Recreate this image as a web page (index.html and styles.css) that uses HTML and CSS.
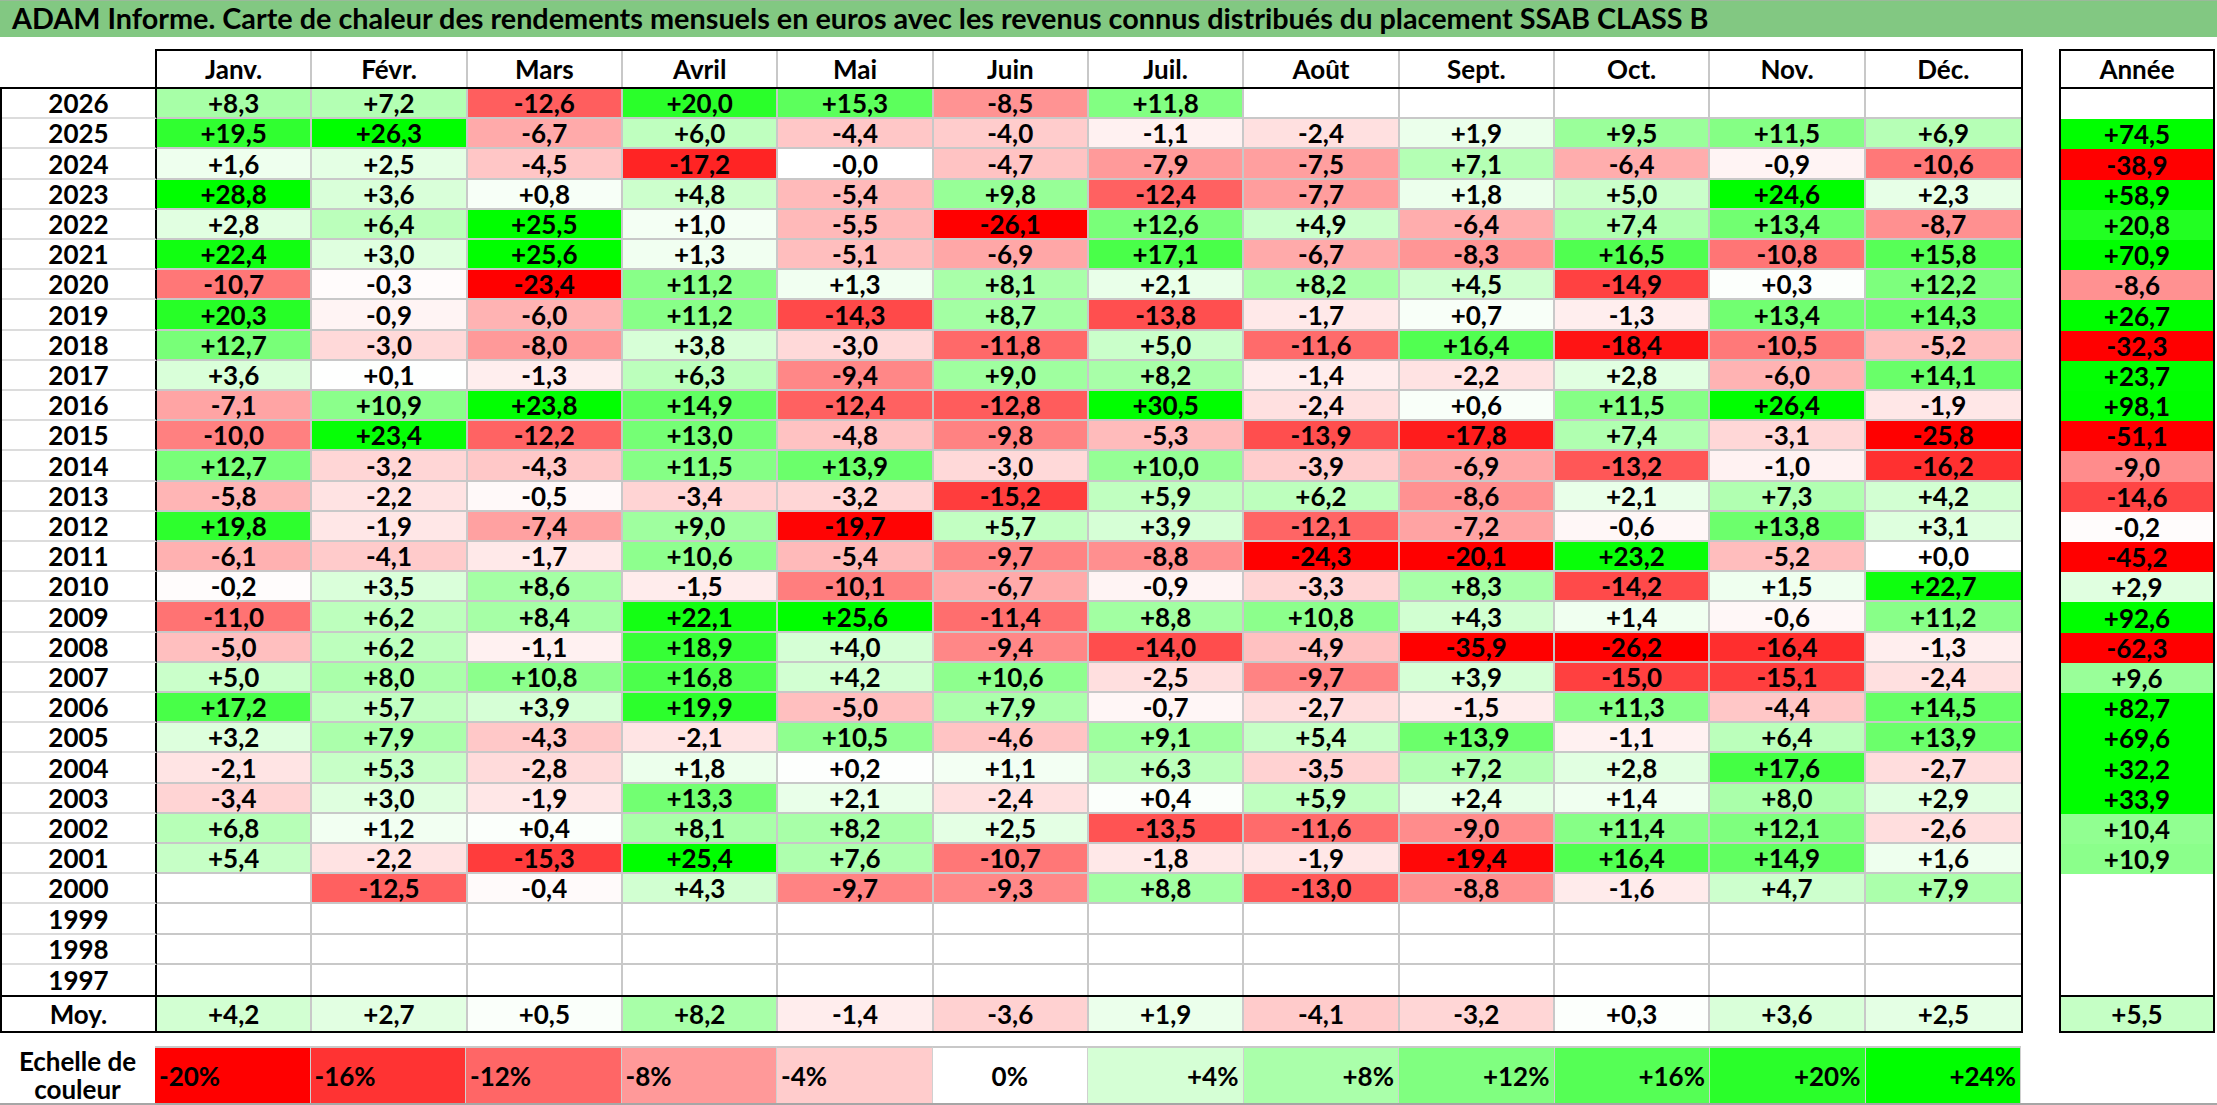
FILE: index.html
```html
<!DOCTYPE html>
<html lang="fr">
<head>
<meta charset="utf-8">
<title>ADAM Informe - SSAB CLASS B</title>
<link rel="stylesheet" href="styles.css">
</head>
<body>
<div class="page">
  <div class="title">ADAM Informe. Carte de chaleur des rendements mensuels en euros avec les revenus connus distribués du placement SSAB CLASS B</div>
  <div class="tables">
    <div class="left">
      <div class="head-row">
        <div class="months-head" id="months-head"></div>
      </div>
      <div class="data" id="data"></div>
      <div class="moy" id="moy"></div>
    </div>
    <div class="right">
      <div class="year-head">Année</div>
      <div class="year-data" id="year-data"></div>
      <div class="year-moy" id="year-moy"></div>
    </div>
  </div>
  <div class="scale" id="scale">
    <div class="scale-label">Echelle de<br>couleur</div>
  </div>
</div>
<script src="script.js"></script>
</body>
</html>
```

FILE: styles.css
```css
html, body {
  margin: 0;
  padding: 0;
  background: #ffffff;
}

.page {
  width: 2217px;
  height: 1105px;
  box-sizing: border-box;
  border-bottom: 2px solid #a6a6a6;
  font-family: Lato, "Liberation Sans", sans-serif;
  color: #000;
  overflow: hidden;
}

.title {
  height: 37px;
  box-sizing: border-box;
  border-top: 1px solid #9bb99b;
  background: #82c882;
  font-weight: 700;
  font-size: 28.8px;
  line-height: 34px;
  padding-left: 12px;
  white-space: nowrap;
}

.tables {
  display: flex;
  gap: 36px;
  margin-top: 12px;
}

.left {
  width: 2023px;
  display: flex;
  flex-direction: column;
}

.head-row {
  height: 38px;
  display: flex;
}

.months-head {
  margin-left: 155px;
  width: 1868px;
  box-sizing: border-box;
  border: 2px solid #000;
  border-bottom: none;
  display: grid;
  grid-template-columns: repeat(12, 1fr);
}

.hcell {
  display: flex;
  align-items: center;
  justify-content: center;
  font-weight: 700;
  font-size: 26px;
  border-right: 2px solid #c8c8c8;
}

.hcell:last-child {
  border-right: none;
}

.data {
  height: 908px;
  box-sizing: border-box;
  border: 2px solid #000;
  border-bottom: none;
  display: grid;
  grid-template-columns: 155px repeat(12, 1fr);
  grid-template-rows: repeat(30, 1fr);
}

.cell {
  box-sizing: border-box;
  display: flex;
  align-items: center;
  justify-content: center;
  font-weight: 700;
  font-size: 26px;
  border-right: 2px solid #c8c8c8;
  border-bottom: 2px solid #c8c8c8;
  min-width: 0;
  min-height: 0;
}

.data .cell:nth-child(13n) {
  border-right: none;
}

.data .cell:nth-last-child(-n+13) {
  border-bottom: none;
}

.cell.yr {
  border-right: 2px solid #000;
  border-bottom-color: #dcdcdc;
}

.moy {
  height: 38px;
  box-sizing: border-box;
  border: 2px solid #000;
  display: grid;
  grid-template-columns: 155px repeat(12, 1fr);
}

.moy .cell {
  border-bottom: none;
}

.moy .cell:last-child {
  border-right: none;
}

.right {
  width: 156px;
  display: flex;
  flex-direction: column;
}

.year-head {
  height: 38px;
  box-sizing: border-box;
  border: 2px solid #000;
  border-bottom: none;
  display: flex;
  align-items: center;
  justify-content: center;
  font-weight: 700;
  font-size: 26px;
}

.year-data {
  height: 908px;
  box-sizing: border-box;
  border: 2px solid #000;
  border-bottom: none;
  display: grid;
  grid-template-rows: repeat(30, 1fr);
}

.acell {
  display: flex;
  align-items: center;
  justify-content: center;
  font-weight: 700;
  font-size: 26px;
  min-height: 0;
}

.year-moy {
  height: 38px;
  box-sizing: border-box;
  border: 2px solid #000;
  display: flex;
}

.year-moy .acell {
  flex: 1;
}

.scale {
  margin-top: 13px;
  height: 57px;
  display: grid;
  grid-template-columns: 155px repeat(12, 155.5px);
}

.scale-label {
  display: flex;
  align-items: center;
  justify-content: center;
  text-align: center;
  font-size: 26px;
  font-weight: 700;
  line-height: 28px;
}

.scell {
  box-sizing: border-box;
  display: flex;
  align-items: center;
  padding: 0 4px;
  font-size: 26px;
  font-weight: 700;
  border-top: 2px solid #c8c8c8;
  border-right: 1px solid #d0d0d0;
}

.scell.neg {
  justify-content: flex-start;
}

.scell.zero {
  justify-content: center;
}

.scell.pos {
  justify-content: flex-end;
}
```

FILE: script.js
```js
(function () {
  var months = ["Janv.", "Févr.", "Mars", "Avril", "Mai", "Juin", "Juil.", "Août", "Sept.", "Oct.", "Nov.", "Déc."];
  var rows = [
    ["2026", "+8,3 +7,2 -12,6 +20,0 +15,3 -8,5 +11,8 _ _ _ _ _", "_"],
    ["2025", "+19,5 +26,3 -6,7 +6,0 -4,4 -4,0 -1,1 -2,4 +1,9 +9,5 +11,5 +6,9", "+74,5"],
    ["2024", "+1,6 +2,5 -4,5 -17,2 -0,0 -4,7 -7,9 -7,5 +7,1 -6,4 -0,9 -10,6", "-38,9"],
    ["2023", "+28,8 +3,6 +0,8 +4,8 -5,4 +9,8 -12,4 -7,7 +1,8 +5,0 +24,6 +2,3", "+58,9"],
    ["2022", "+2,8 +6,4 +25,5 +1,0 -5,5 -26,1 +12,6 +4,9 -6,4 +7,4 +13,4 -8,7", "+20,8"],
    ["2021", "+22,4 +3,0 +25,6 +1,3 -5,1 -6,9 +17,1 -6,7 -8,3 +16,5 -10,8 +15,8", "+70,9"],
    ["2020", "-10,7 -0,3 -23,4 +11,2 +1,3 +8,1 +2,1 +8,2 +4,5 -14,9 +0,3 +12,2", "-8,6"],
    ["2019", "+20,3 -0,9 -6,0 +11,2 -14,3 +8,7 -13,8 -1,7 +0,7 -1,3 +13,4 +14,3", "+26,7"],
    ["2018", "+12,7 -3,0 -8,0 +3,8 -3,0 -11,8 +5,0 -11,6 +16,4 -18,4 -10,5 -5,2", "-32,3"],
    ["2017", "+3,6 +0,1 -1,3 +6,3 -9,4 +9,0 +8,2 -1,4 -2,2 +2,8 -6,0 +14,1", "+23,7"],
    ["2016", "-7,1 +10,9 +23,8 +14,9 -12,4 -12,8 +30,5 -2,4 +0,6 +11,5 +26,4 -1,9", "+98,1"],
    ["2015", "-10,0 +23,4 -12,2 +13,0 -4,8 -9,8 -5,3 -13,9 -17,8 +7,4 -3,1 -25,8", "-51,1"],
    ["2014", "+12,7 -3,2 -4,3 +11,5 +13,9 -3,0 +10,0 -3,9 -6,9 -13,2 -1,0 -16,2", "-9,0"],
    ["2013", "-5,8 -2,2 -0,5 -3,4 -3,2 -15,2 +5,9 +6,2 -8,6 +2,1 +7,3 +4,2", "-14,6"],
    ["2012", "+19,8 -1,9 -7,4 +9,0 -19,7 +5,7 +3,9 -12,1 -7,2 -0,6 +13,8 +3,1", "-0,2"],
    ["2011", "-6,1 -4,1 -1,7 +10,6 -5,4 -9,7 -8,8 -24,3 -20,1 +23,2 -5,2 +0,0", "-45,2"],
    ["2010", "-0,2 +3,5 +8,6 -1,5 -10,1 -6,7 -0,9 -3,3 +8,3 -14,2 +1,5 +22,7", "+2,9"],
    ["2009", "-11,0 +6,2 +8,4 +22,1 +25,6 -11,4 +8,8 +10,8 +4,3 +1,4 -0,6 +11,2", "+92,6"],
    ["2008", "-5,0 +6,2 -1,1 +18,9 +4,0 -9,4 -14,0 -4,9 -35,9 -26,2 -16,4 -1,3", "-62,3"],
    ["2007", "+5,0 +8,0 +10,8 +16,8 +4,2 +10,6 -2,5 -9,7 +3,9 -15,0 -15,1 -2,4", "+9,6"],
    ["2006", "+17,2 +5,7 +3,9 +19,9 -5,0 +7,9 -0,7 -2,7 -1,5 +11,3 -4,4 +14,5", "+82,7"],
    ["2005", "+3,2 +7,9 -4,3 -2,1 +10,5 -4,6 +9,1 +5,4 +13,9 -1,1 +6,4 +13,9", "+69,6"],
    ["2004", "-2,1 +5,3 -2,8 +1,8 +0,2 +1,1 +6,3 -3,5 +7,2 +2,8 +17,6 -2,7", "+32,2"],
    ["2003", "-3,4 +3,0 -1,9 +13,3 +2,1 -2,4 +0,4 +5,9 +2,4 +1,4 +8,0 +2,9", "+33,9"],
    ["2002", "+6,8 +1,2 +0,4 +8,1 +8,2 +2,5 -13,5 -11,6 -9,0 +11,4 +12,1 -2,6", "+10,4"],
    ["2001", "+5,4 -2,2 -15,3 +25,4 +7,6 -10,7 -1,8 -1,9 -19,4 +16,4 +14,9 +1,6", "+10,9"],
    ["2000", "_ -12,5 -0,4 +4,3 -9,7 -9,3 +8,8 -13,0 -8,8 -1,6 +4,7 +7,9", "_"],
    ["1999", "_ _ _ _ _ _ _ _ _ _ _ _", "_"],
    ["1998", "_ _ _ _ _ _ _ _ _ _ _ _", "_"],
    ["1997", "_ _ _ _ _ _ _ _ _ _ _ _", "_"]
  ];
  var moy = "+4,2 +2,7 +0,5 +8,2 -1,4 -3,6 +1,9 -4,1 -3,2 +0,3 +3,6 +2,5";
  var moyYear = "+5,5";

  function colour(v) {
    var c;
    if (v >= 0) {
      c = Math.round(255 * (1 - Math.min(v / 24, 1)));
      return "rgb(" + c + ",255," + c + ")";
    }
    c = Math.round(255 * (1 - Math.min(-v / 20, 1)));
    return "rgb(255," + c + "," + c + ")";
  }

  function el(cls, text) {
    var d = document.createElement("div");
    d.className = cls;
    if (text) d.textContent = text;
    return d;
  }

  function valueCell(cls, s) {
    if (s === "_") return el(cls, "");
    var d = el(cls, s);
    var v = parseFloat(s.replace(",", "."));
    d.style.background = colour(v);
    return d;
  }

  var mh = document.getElementById("months-head");
  months.forEach(function (m) { mh.appendChild(el("hcell", m)); });

  var data = document.getElementById("data");
  var ydata = document.getElementById("year-data");
  rows.forEach(function (r) {
    data.appendChild(el("cell yr", r[0]));
    r[1].split(" ").forEach(function (s) { data.appendChild(valueCell("cell", s)); });
    ydata.appendChild(valueCell("acell", r[2]));
  });

  var moyEl = document.getElementById("moy");
  moyEl.appendChild(el("cell yr", "Moy."));
  moy.split(" ").forEach(function (s) { moyEl.appendChild(valueCell("cell", s)); });
  document.getElementById("year-moy").appendChild(valueCell("acell", moyYear));

  var scale = document.getElementById("scale");
  [-20, -16, -12, -8, -4, 0, 4, 8, 12, 16, 20, 24].forEach(function (p) {
    var cls = p < 0 ? "scell neg" : (p === 0 ? "scell zero" : "scell pos");
    var d = el(cls, (p > 0 ? "+" : "") + p + "%");
    d.style.background = colour(p);
    scale.appendChild(d);
  });
})();
```
